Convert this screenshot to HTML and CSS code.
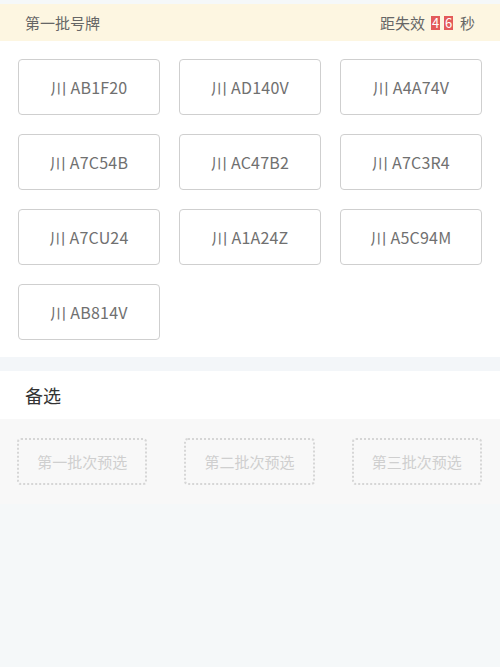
FILE: index.html
```html
<!DOCTYPE html>
<html lang="zh">
<head>
<meta charset="utf-8">
<link rel="stylesheet" href="styles.css">
</head>
<body>
<div class="topbar">
  <span class="title">第一批号牌</span>
  <span class="timer"><span class="label">距失效</span><span class="digit">4</span><span class="digit">6</span><span class="unit">秒</span></span>
</div>
<div class="plates">
  <div class="plate">川 AB1F20</div>
  <div class="plate">川 AD140V</div>
  <div class="plate">川 A4A74V</div>
  <div class="plate">川 A7C54B</div>
  <div class="plate">川 AC47B2</div>
  <div class="plate">川 A7C3R4</div>
  <div class="plate">川 A7CU24</div>
  <div class="plate">川 A1A24Z</div>
  <div class="plate">川 A5C94M</div>
  <div class="plate">川 AB814V</div>
</div>
<div class="divider"></div>
<div class="section-head">备选</div>
<div class="choices">
  <div class="choice">第一批次预选</div>
  <div class="choice">第二批次预选</div>
  <div class="choice">第三批次预选</div>
</div>
</body>
</html>
```
FILE: styles.css
```css
html, body {
  margin: 0;
  padding: 0;
}
body {
  width: 500px;
  min-height: 667px;
  background: #f5f8f9;
  font-family: "Noto Sans CJK SC", "Noto Sans", sans-serif;
}
.topbar {
  margin-top: 4px;
  height: 37px;
  background: #fdf6e1;
  display: flex;
  align-items: center;
  justify-content: space-between;
  padding: 0 25px 0 25px;
  font-size: 15px;
  color: #666;
}
.timer {
  display: flex;
  align-items: center;
}
.label {
  margin-right: 6px;
}
.digit {
  display: inline-block;
  background: #e35a5a;
  color: #fff;
  width: 9px;
  height: 14px;
  line-height: 14px;
  font-size: 13px;
  text-align: center;
  margin-right: 4px;
}
.unit {
  margin-left: 3px;
}
.plates {
  background: #fff;
  display: grid;
  grid-template-columns: repeat(3, 142px);
  column-gap: 19px;
  row-gap: 19px;
  padding: 18px 19px 17px 18px;
}
.plate {
  height: 54px;
  border: 1px solid #cfcfcf;
  border-radius: 4px;
  display: flex;
  align-items: center;
  justify-content: center;
  font-size: 16px;
  color: #707070;
  letter-spacing: 0.2px;
}
.divider {
  height: 14px;
  background: #f3f6f9;
}
.section-head {
  background: #fff;
  height: 48px;
  display: flex;
  align-items: center;
  padding-left: 25px;
  font-size: 18px;
  color: #333;
}
.choices {
  background: #f8f8f8;
  display: flex;
  gap: 37px;
  padding: 19px 18px 19px 17px;
}
.choice {
  width: 127px;
  height: 43px;
  border: 2px dotted #d6d6d6;
  border-radius: 4px;
  display: flex;
  align-items: center;
  justify-content: center;
  font-size: 15px;
  color: #cfcfcf;
}
```
